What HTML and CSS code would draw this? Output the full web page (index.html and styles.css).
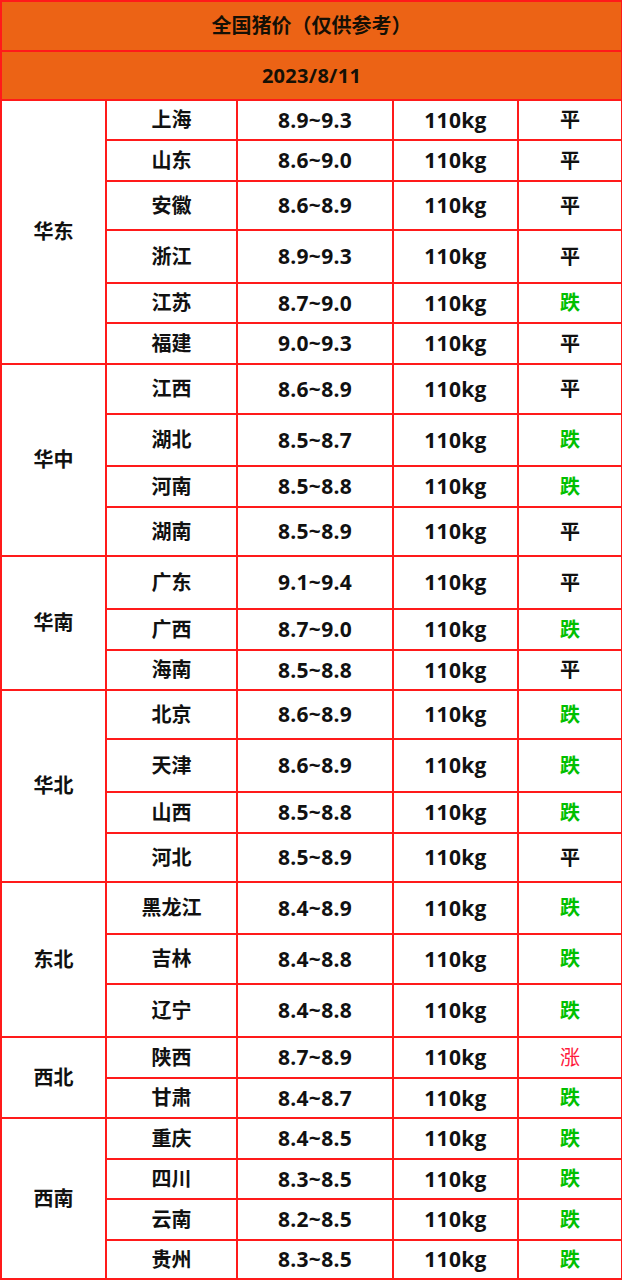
FILE: index.html
```html
<!DOCTYPE html>
<html lang="zh-CN">
<head>
<meta charset="utf-8">
<title>全国猪价</title>
<link rel="stylesheet" href="styles.css">
</head>
<body>
<table class="price-table">
  <colgroup>
    <col class="c-region"><col class="c-prov"><col class="c-price"><col class="c-weight"><col class="c-trend">
  </colgroup>
  <tbody>
    <tr class="h50"><td class="head" colspan="5">全国猪价（仅供参考）</td></tr>
    <tr class="h49"><td class="head num" colspan="5">2023/8/11</td></tr>

    <tr class="h40"><td rowspan="6">华东</td><td>上海</td><td class="num">8.9~9.3</td><td class="num">110kg</td><td>平</td></tr>
    <tr class="h41"><td>山东</td><td class="num">8.6~9.0</td><td class="num">110kg</td><td>平</td></tr>
    <tr class="h49"><td>安徽</td><td class="num">8.6~8.9</td><td class="num">110kg</td><td>平</td></tr>
    <tr class="h53"><td>浙江</td><td class="num">8.9~9.3</td><td class="num">110kg</td><td>平</td></tr>
    <tr class="h40"><td>江苏</td><td class="num">8.7~9.0</td><td class="num">110kg</td><td class="down">跌</td></tr>
    <tr class="h41"><td>福建</td><td class="num">9.0~9.3</td><td class="num">110kg</td><td>平</td></tr>

    <tr class="h50"><td rowspan="4">华中</td><td>江西</td><td class="num">8.6~8.9</td><td class="num">110kg</td><td>平</td></tr>
    <tr class="h52"><td>湖北</td><td class="num">8.5~8.7</td><td class="num">110kg</td><td class="down">跌</td></tr>
    <tr class="h41"><td>河南</td><td class="num">8.5~8.8</td><td class="num">110kg</td><td class="down">跌</td></tr>
    <tr class="h49"><td>湖南</td><td class="num">8.5~8.9</td><td class="num">110kg</td><td>平</td></tr>

    <tr class="h53"><td rowspan="3">华南</td><td>广东</td><td class="num">9.1~9.4</td><td class="num">110kg</td><td>平</td></tr>
    <tr class="h41"><td>广西</td><td class="num">8.7~9.0</td><td class="num">110kg</td><td class="down">跌</td></tr>
    <tr class="h40"><td>海南</td><td class="num">8.5~8.8</td><td class="num">110kg</td><td>平</td></tr>

    <tr class="h49"><td rowspan="4">华北</td><td>北京</td><td class="num">8.6~8.9</td><td class="num">110kg</td><td class="down">跌</td></tr>
    <tr class="h53"><td>天津</td><td class="num">8.6~8.9</td><td class="num">110kg</td><td class="down">跌</td></tr>
    <tr class="h41"><td>山西</td><td class="num">8.5~8.8</td><td class="num">110kg</td><td class="down">跌</td></tr>
    <tr class="h49"><td>河北</td><td class="num">8.5~8.9</td><td class="num">110kg</td><td>平</td></tr>

    <tr class="h52"><td rowspan="3">东北</td><td>黑龙江</td><td class="num">8.4~8.9</td><td class="num">110kg</td><td class="down">跌</td></tr>
    <tr class="h50"><td>吉林</td><td class="num">8.4~8.8</td><td class="num">110kg</td><td class="down">跌</td></tr>
    <tr class="h53"><td>辽宁</td><td class="num">8.4~8.8</td><td class="num">110kg</td><td class="down">跌</td></tr>

    <tr class="h41"><td rowspan="2">西北</td><td>陕西</td><td class="num">8.7~8.9</td><td class="num">110kg</td><td class="up">涨</td></tr>
    <tr class="h40"><td>甘肃</td><td class="num">8.4~8.7</td><td class="num">110kg</td><td class="down">跌</td></tr>

    <tr class="h41"><td rowspan="4">西南</td><td>重庆</td><td class="num">8.4~8.5</td><td class="num">110kg</td><td class="down">跌</td></tr>
    <tr class="h40"><td>四川</td><td class="num">8.3~8.5</td><td class="num">110kg</td><td class="down">跌</td></tr>
    <tr class="h41"><td>云南</td><td class="num">8.2~8.5</td><td class="num">110kg</td><td class="down">跌</td></tr>
    <tr class="h39"><td>贵州</td><td class="num">8.3~8.5</td><td class="num">110kg</td><td class="down">跌</td></tr>
  </tbody>
</table>
</body>
</html>
```

FILE: styles.css
```css
html, body {
  margin: 0;
  padding: 0;
  background: #ffffff;
}

.price-table {
  width: 621px;
  table-layout: fixed;
  border-collapse: collapse;
  border: 2px solid #ff0000;
  font-family: "Open Sans", "Noto Sans CJK SC", sans-serif;
  font-weight: 700;
  font-size: 20px;
  color: #111111;
}

.c-region { width: 105px; }
.c-prov { width: 131px; }
.c-price { width: 156px; }
.c-weight { width: 125px; }
.c-trend { width: 104px; }

.price-table td {
  border: 2px solid #ff1a1a;
  padding: 0;
  text-align: center;
  vertical-align: middle;
  line-height: 1;
  white-space: nowrap;
}

.price-table td.num {
  font-size: 21px;
  letter-spacing: 0.3px;
}

.price-table td.head {
  background: #ec6315;
  font-size: 20px;
  color: #151005;
}

.price-table td.head.num {
  font-size: 20px;
}

.price-table td.down { color: #00c000; font-weight: 700; }
.price-table td.up { color: #ff1a3c; font-weight: 400; }

.h39 { height: 39px; }
.h40 { height: 40px; }
.h41 { height: 41px; }
.h49 { height: 49px; }
.h50 { height: 50px; }
.h52 { height: 52px; }
.h53 { height: 53px; }
```
